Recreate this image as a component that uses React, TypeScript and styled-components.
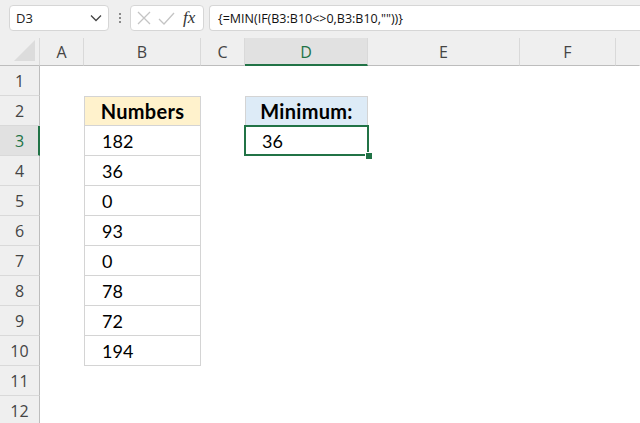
import { createGlobalStyle, styled } from "styled-components";

const GlobalStyle = createGlobalStyle`
  html, body {
    margin: 0;
    padding: 0;
    background: #ffffff;
    overflow: hidden;
  }
`;

const green = "#217346";
const uiFont = `"Open Sans", "Noto Sans", sans-serif`;
const cellFont = `Lato, "Noto Sans", sans-serif`;

const Window = styled.div`
  width: 640px;
  height: 423px;
  overflow: hidden;
  display: flex;
  flex-direction: column;
  background: #ffffff;
`;

const FormulaBar = styled.div`
  height: 38px;
  flex-shrink: 0;
  box-sizing: border-box;
  background: #efefef;
  display: flex;
  align-items: flex-start;
  padding: 5px 0 0 9px;
`;

const NameBox = styled.div`
  width: 100px;
  height: 26px;
  box-sizing: border-box;
  background: #ffffff;
  border: 1px solid #d6d6d6;
  border-radius: 4px;
  display: flex;
  align-items: center;
  justify-content: space-between;
  padding: 0 6px 0 6px;
  font-family: ${uiFont};
  font-size: 13px;
  color: #222;
`;

const Dots = styled.div`
  width: 21px;
  display: flex;
  flex-direction: column;
  align-items: center;
  gap: 2px;
  padding-top: 8px;

  span {
    width: 2px;
    height: 2px;
    background: #8a8a8a;
  }
`;

const ActionBox = styled.div`
  width: 74px;
  height: 26px;
  box-sizing: border-box;
  background: #ffffff;
  border: 1px solid #d6d6d6;
  border-radius: 4px;
  display: flex;
  align-items: center;
  padding: 0 4px 0 6px;
  gap: 7px;
`;

const Fx = styled.span`
  font-family: "Liberation Serif", "DejaVu Serif", serif;
  font-style: italic;
  font-size: 17px;
  color: #333;
  margin-left: 1px;
`;

const FormulaInput = styled.div`
  margin-left: 5px;
  flex: 1;
  height: 26px;
  box-sizing: border-box;
  background: #ffffff;
  border: 1px solid #d6d6d6;
  border-right: none;
  border-radius: 4px 0 0 4px;
  display: flex;
  align-items: center;
  padding-left: 8px;
  font-family: ${uiFont};
  font-size: 12.5px;
  color: #111;
`;

const Grid = styled.div`
  flex-shrink: 0;
  display: grid;
  grid-template-columns: 40px 44px 117px 44px 123px 152px 96px 1fr;
  grid-template-rows: 28px repeat(12, 30px);
`;

const ColHead = styled.div<{ $active?: boolean; $last?: boolean }>`
  box-sizing: border-box;
  background: ${(p) => (p.$active ? "#e1e1e1" : "#efefef")};
  border-right: 1px solid ${(p) => (p.$last ? "transparent" : "#d9d9d9")};
  border-bottom: ${(p) => (p.$active ? `2px solid ${green}` : "1px solid #bdbdbd")};
  display: flex;
  align-items: center;
  justify-content: center;
  font-family: ${uiFont};
  font-size: 16px;
  color: ${(p) => (p.$active ? green : "#444")};
  padding-top: ${(p) => (p.$active ? "1px" : "0")};
`;

const Corner = styled.div`
  position: relative;
  box-sizing: border-box;
  background: #efefef;
  border-right: 1px solid #d9d9d9;
  border-bottom: 1px solid #bdbdbd;

  &::after {
    content: "";
    position: absolute;
    right: 4px;
    bottom: 4px;
    width: 0;
    height: 0;
    border-left: 21px solid transparent;
    border-bottom: 21px solid #dcdcdc;
  }
`;

const RowHead = styled.div<{ $active?: boolean }>`
  box-sizing: border-box;
  background: ${(p) => (p.$active ? "#e1e1e1" : "#efefef")};
  border-right: ${(p) => (p.$active ? `2px solid ${green}` : "1px solid #bdbdbd")};
  border-bottom: 1px solid #d9d9d9;
  display: flex;
  align-items: center;
  justify-content: center;
  font-family: ${uiFont};
  font-size: 16px;
  color: ${(p) => (p.$active ? green : "#444")};
  padding-left: ${(p) => (p.$active ? "1px" : "0")};
`;

const Cell = styled.div<{
  $bg?: string;
  $bold?: boolean;
  $center?: boolean;
  $boxed?: boolean;
  $top?: boolean;
}>`
  box-sizing: border-box;
  background: ${(p) => p.$bg ?? "#ffffff"};
  border-left: ${(p) => (p.$boxed ? "1px solid #d4d4d4" : "none")};
  border-right: ${(p) => (p.$boxed ? "1px solid #d4d4d4" : "none")};
  border-bottom: ${(p) => (p.$boxed ? "1px solid #d4d4d4" : "none")};
  border-top: ${(p) => (p.$top ? "1px solid #d4d4d4" : "none")};
  display: flex;
  align-items: center;
  justify-content: ${(p) => (p.$center ? "center" : "flex-start")};
  padding-left: ${(p) => (p.$center ? "0" : "17px")};
  font-family: ${cellFont};
  font-size: ${(p) => (p.$bold ? "20px" : "18px")};
  letter-spacing: ${(p) => (p.$bold ? "0.3px" : "0")};
  font-weight: ${(p) => (p.$bold ? 700 : 400)};
  color: #000;
`;

const ActiveCell = styled.div`
  position: relative;
  box-sizing: border-box;
  margin: -1px -1px 0 -1px;
  border: 2px solid ${green};
  background: #ffffff;
  display: flex;
  align-items: center;
  padding-left: 16px;
  font-family: ${cellFont};
  font-size: 18px;
  color: #000;
`;

const Handle = styled.span`
  position: absolute;
  right: -5px;
  bottom: -5px;
  width: 6px;
  height: 6px;
  background: ${green};
  border-left: 1px solid #fff;
  border-top: 1px solid #fff;
`;

const columns = ["A", "B", "C", "D", "E", "F", ""];
const numbers = ["182", "36", "0", "93", "0", "78", "72", "194"];

const ChevronDown = () => (
  <svg width="12" height="8" viewBox="0 0 12 8">
    <path d="M1 1.5 L6 6.5 L11 1.5" fill="none" stroke="#444" strokeWidth="1.3" />
  </svg>
);

const Cross = () => (
  <svg width="14" height="14" viewBox="0 0 14 14">
    <path d="M1 1 L13 13 M13 1 L1 13" stroke="#c4c4c4" strokeWidth="1.3" />
  </svg>
);

const Check = () => (
  <svg width="17" height="13" viewBox="0 0 17 13">
    <path d="M1 7 L6 12 L16 1" fill="none" stroke="#c4c4c4" strokeWidth="1.3" />
  </svg>
);

const App = () => {
  const renderRow = (r: number) => {
    const cells = [];
    cells.push(
      <RowHead key={`h${r}`} $active={r === 3}>
        {r}
      </RowHead>
    );
    // A
    cells.push(<Cell key={`a${r}`} />);
    // B
    if (r === 2) {
      cells.push(
        <Cell key={`b${r}`} $bg="#fff2cc" $bold $center $boxed $top>
          Numbers
        </Cell>
      );
    } else if (r >= 3 && r <= 10) {
      cells.push(
        <Cell key={`b${r}`} $boxed>
          {numbers[r - 3]}
        </Cell>
      );
    } else {
      cells.push(<Cell key={`b${r}`} />);
    }
    // C
    cells.push(<Cell key={`c${r}`} />);
    // D
    if (r === 2) {
      cells.push(
        <Cell key={`d${r}`} $bg="#ddebf7" $bold $center $boxed $top>
          Minimum:
        </Cell>
      );
    } else if (r === 3) {
      cells.push(
        <ActiveCell key={`d${r}`}>
          36
          <Handle />
        </ActiveCell>
      );
    } else {
      cells.push(<Cell key={`d${r}`} />);
    }
    cells.push(<Cell key={`e${r}`} />);
    cells.push(<Cell key={`f${r}`} />);
    cells.push(<Cell key={`g${r}`} />);
    return cells;
  };

  return (
    <>
      <GlobalStyle />
      <Window>
        <FormulaBar>
          <NameBox>
            <span>D3</span>
            <ChevronDown />
          </NameBox>
          <Dots>
            <span />
            <span />
            <span />
          </Dots>
          <ActionBox>
            <Cross />
            <Check />
            <Fx>fx</Fx>
          </ActionBox>
          <FormulaInput>{'{=MIN(IF(B3:B10<>0,B3:B10,""))}'}</FormulaInput>
        </FormulaBar>
        <Grid>
          <Corner />
          {columns.map((c, i) => (
            <ColHead key={i} $active={c === "D"} $last={i === columns.length - 1}>
              {c}
            </ColHead>
          ))}
          {Array.from({ length: 12 }, (_, i) => renderRow(i + 1))}
        </Grid>
      </Window>
    </>
  );
};

export default App;
